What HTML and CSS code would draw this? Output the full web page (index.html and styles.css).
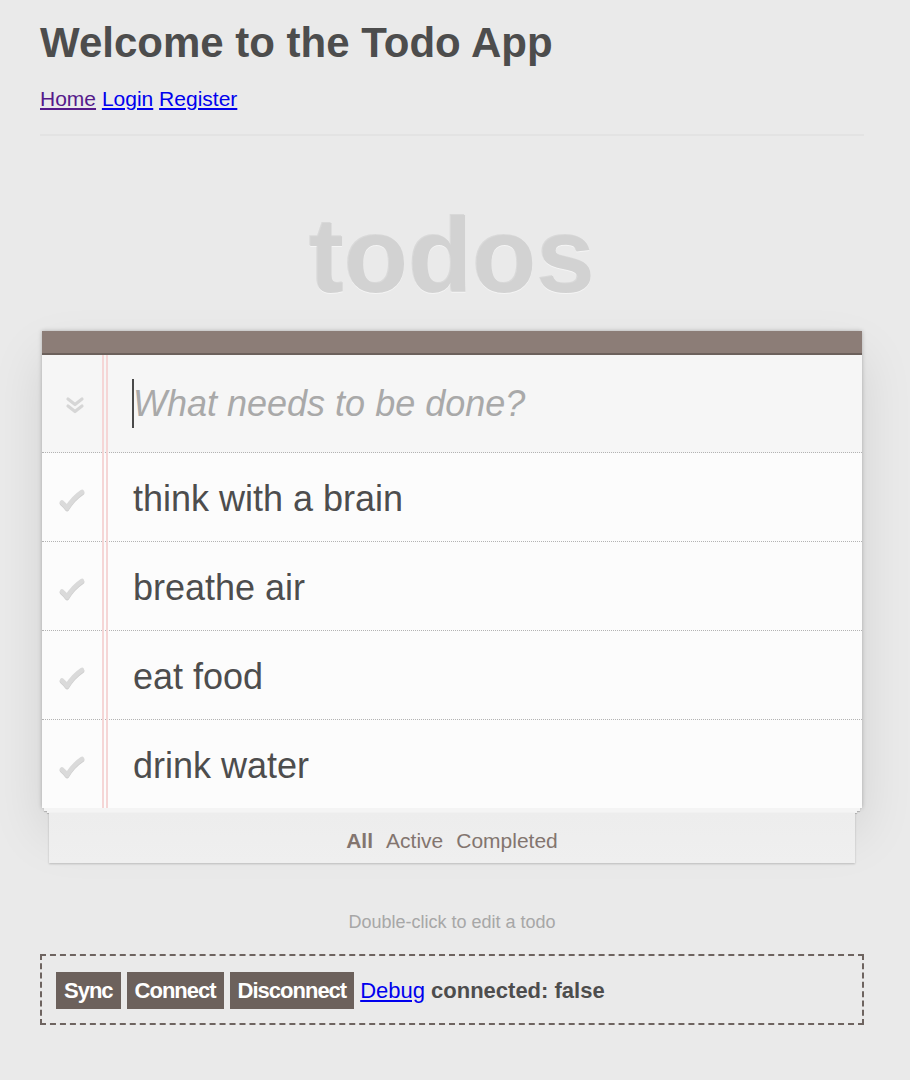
FILE: index.html
```html
<!DOCTYPE html>
<html lang="en">
<head>
<meta charset="utf-8">
<title>Todo App</title>
<link rel="stylesheet" href="styles.css">
</head>
<body>
<div class="page">
  <h1 class="title">Welcome to the Todo App</h1>
  <nav class="nav"><a class="visited" href="#">Home</a> <a href="#">Login</a> <a href="#">Register</a></nav>
  <hr class="rule">
  <section class="todoapp">
    <h1 class="brand">todos</h1>
    <div class="card">
      <div class="card-top"></div>
      <div class="sheet">
        <div class="new-row">
          <div class="toggle-cell">
            <svg class="toggle-all" width="20" height="19" viewBox="0 0 20 19">
              <path d="M3 3 L10 8.5 L17 3" fill="none" stroke="#d6d6d6" stroke-width="3.2" stroke-linecap="round" stroke-linejoin="round"/>
              <path d="M3 10 L10 15.5 L17 10" fill="none" stroke="#d6d6d6" stroke-width="3.2" stroke-linecap="round" stroke-linejoin="round"/>
            </svg>
          </div>
          <div class="input-wrap">
            <span class="caret"></span>
            <input class="new-todo" type="text" placeholder="What needs to be done?">
          </div>
        </div>
        <ul class="list">
          <li class="item"><span class="check"><svg width="28" height="24" viewBox="0 0 28 24"><path class="check-shadow" d="M4 15.5 Q7 18 9 21 Q15 11 24 5"/><path class="check-mark" d="M4 14.5 Q7 17 9 20 Q15 10 24 4"/></svg></span><span class="label">think with a brain</span></li>
          <li class="item"><span class="check"><svg width="28" height="24" viewBox="0 0 28 24"><path class="check-shadow" d="M4 15.5 Q7 18 9 21 Q15 11 24 5"/><path class="check-mark" d="M4 14.5 Q7 17 9 20 Q15 10 24 4"/></svg></span><span class="label">breathe air</span></li>
          <li class="item"><span class="check"><svg width="28" height="24" viewBox="0 0 28 24"><path class="check-shadow" d="M4 15.5 Q7 18 9 21 Q15 11 24 5"/><path class="check-mark" d="M4 14.5 Q7 17 9 20 Q15 10 24 4"/></svg></span><span class="label">eat food</span></li>
          <li class="item"><span class="check"><svg width="28" height="24" viewBox="0 0 28 24"><path class="check-shadow" d="M4 15.5 Q7 18 9 21 Q15 11 24 5"/><path class="check-mark" d="M4 14.5 Q7 17 9 20 Q15 10 24 4"/></svg></span><span class="label">drink water</span></li>
        </ul>
      </div>
    </div>
    <div class="stack stack1"></div>
    <div class="stack stack2"></div>
    <footer class="filters">
      <a class="filter selected" href="#">All</a>
      <a class="filter" href="#">Active</a>
      <a class="filter" href="#">Completed</a>
    </footer>
  </section>
  <p class="info">Double-click to edit a todo</p>
  <div class="socket">
    <button class="btn">Sync</button>
    <button class="btn">Connect</button>
    <button class="btn">Disconnect</button>
    <a class="debug" href="#">Debug</a>
    <span class="status">connected: false</span>
  </div>
</div>
</body>
</html>
```

FILE: styles.css
```css
html, body {
  margin: 0;
  background: #eaeaea;
}

body {
  font-family: "Liberation Sans", Arial, Helvetica, sans-serif;
  color: #4d4d4d;
}

.page {
  padding: 19px 46px 40px 40px;
}

.title {
  margin: 0;
  font-size: 42px;
  font-weight: 700;
  line-height: 47px;
  color: #4d4d4d;
}

.nav {
  margin-top: 21px;
  font-size: 21px;
  line-height: 24px;
}

.nav a {
  color: #0000ee;
}

.nav a.visited {
  color: #551a8b;
}

.rule {
  margin: 23px 0 0;
  border: 0;
  border-top: 2px solid #e3e3e3;
  height: 0;
}

.brand {
  margin: 60px 0 0;
  font-size: 105px;
  font-weight: 700;
  line-height: 120px;
  text-align: center;
  color: #d2d2d2;
  text-shadow: -1px -1px 0 rgba(0, 0, 0, 0.07), 0 1px 0 rgba(255, 255, 255, 0.5);
}

.card {
  margin: 15px 2px 0;
  box-shadow: 0 0 4px rgba(0, 0, 0, 0.25), 0 25px 50px rgba(0, 0, 0, 0.1);
}

.card-top {
  height: 22px;
  background: #8c7d77;
  border-bottom: 2px solid #6c615c;
}

.sheet {
  position: relative;
  background: #fcfcfc;
}

.sheet::before {
  content: "";
  position: absolute;
  top: 0;
  bottom: 0;
  left: 60px;
  width: 2px;
  border-left: 2px solid #f5d6d6;
  border-right: 2px solid #f5d6d6;
}

.new-row {
  display: flex;
  align-items: center;
  height: 97px;
  background: #f6f6f6;
  border-bottom: 1px dotted #b3b3b3;
}

.toggle-cell {
  flex: none;
  width: 66px;
  box-sizing: border-box;
  padding-left: 23px;
  padding-top: 4px;
  display: flex;
}

.input-wrap {
  flex: 1;
  position: relative;
  height: 48px;
}

.caret {
  position: absolute;
  left: 24px;
  top: -1px;
  width: 2px;
  height: 49px;
  background: #4a4a4a;
}

.new-todo {
  display: block;
  width: 100%;
  height: 48px;
  box-sizing: border-box;
  margin: 0;
  padding: 0 0 0 25px;
  border: 0;
  background: transparent;
  outline: none;
  font-family: "Liberation Sans", Arial, Helvetica, sans-serif;
  font-size: 36px;
  font-style: italic;
  color: #4d4d4d;
}

.new-todo::placeholder {
  color: #a9a9a9;
  font-style: italic;
}

.list {
  list-style: none;
  margin: 0;
  padding: 0;
}

.item {
  display: flex;
  align-items: center;
  height: 88px;
  border-bottom: 1px dotted #b3b3b3;
}

.item:last-child {
  border-bottom: 0;
}

.check {
  flex: none;
  width: 60px;
  display: flex;
  justify-content: center;
  padding-top: 5px;
}

.check svg {
  display: block;
  margin-left: -1px;
}

.check-mark,
.check-shadow {
  fill: none;
  stroke-width: 4.6;
  stroke-linecap: round;
  stroke-linejoin: round;
}

.check-mark {
  stroke: #dadada;
}

.check-shadow {
  stroke: #cdcdcd;
}

.label {
  margin-left: 31px;
  padding-top: 4px;
  font-size: 36px;
  color: #4d4d4d;
}

.stack {
  background: #f4f4f4;
  box-shadow: 0 1px 1px rgba(0, 0, 0, 0.22);
}

.stack1 {
  margin: 0 4px;
  height: 3px;
}

.stack2 {
  margin: 0 7px;
  height: 2px;
}

.filters {
  margin: 0 9px;
  height: 50px;
  box-sizing: border-box;
  padding-top: 5px;
  display: flex;
  justify-content: center;
  align-items: center;
  gap: 13px;
  background: linear-gradient(#ededed, #efefef);
  box-shadow: 0 1px 2px rgba(0, 0, 0, 0.2);
  font-size: 21px;
}

.filter {
  color: #83756f;
  text-decoration: none;
}

.filter.selected {
  font-weight: 700;
}

.info {
  margin: 49px 0 0;
  text-align: center;
  font-size: 18px;
  line-height: 21px;
  color: #a7a7a7;
}

.socket {
  margin-top: 21px;
  border: 2px dashed #6e6460;
  padding: 16px 14px 14px;
  display: flex;
  align-items: center;
  gap: 6px;
  font-size: 22px;
}

.btn {
  display: flex;
  align-items: center;
  height: 37px;
  margin: 0;
  padding: 0 8px;
  border: 0;
  background: #6c615c;
  color: #ffffff;
  font-family: "Liberation Sans", Arial, Helvetica, sans-serif;
  font-size: 22px;
  font-weight: 700;
  letter-spacing: -1px;
}

.debug {
  color: #0000ee;
}

.status {
  font-weight: 700;
  color: #4d4d4d;
}
```
